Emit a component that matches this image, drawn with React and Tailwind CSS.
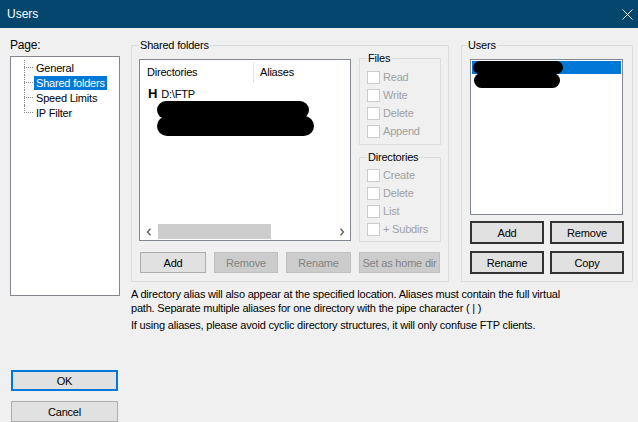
import React from "react";

const font = { fontFamily: '"Liberation Sans", Arial, sans-serif' };

const treeItems = ["General", "Shared folders", "Speed Limits", "IP Filter"];

function TreeRow({ label, selected, last }) {
  return (
    <div className="flex h-[15px] items-center">
      {/* connector */}
      <div className="relative h-full w-[10px] shrink-0">
        <div
          className={`absolute left-0 top-0 w-0 border-l border-dotted border-[#8a8a8a] ${
            last ? "h-[8px]" : "h-full"
          }`}
        />
        <div className="absolute left-0 top-[7px] w-[9px] border-t border-dotted border-[#8a8a8a]" />
      </div>
      <span
        className={`px-[2px] leading-[14px] ${
          selected ? "bg-[#0078d7] text-white" : "text-black"
        }`}
      >
        {label}
      </span>
    </div>
  );
}

function Check({ label }) {
  return (
    <div className="flex h-[18px] items-center gap-[3px]">
      <span className="h-[13px] w-[13px] border border-[#cccccc] bg-white" />
      <span className="text-[#a0a0a0]">{label}</span>
    </div>
  );
}

function Btn({ children, disabled, className = "" }) {
  return (
    <button
      className={`flex items-center justify-center whitespace-nowrap border ${
        disabled
          ? "border-[#bfbfbf] bg-[#cccccc] text-[#838383]"
          : "border-[#adadad] bg-[#e1e1e1] text-black"
      } ${className}`}
    >
      {children}
    </button>
  );
}

function UserBtn({ children }) {
  return (
    <button className="flex h-[23px] w-[74px] items-center justify-center border-2 border-[#333333] bg-[#e1e1e1] text-black">
      {children}
    </button>
  );
}

function Chevron({ dir }) {
  return (
    <svg width="6" height="8" viewBox="0 0 6 8">
      <path
        d={dir === "left" ? "M4.5 0.8 L1.5 4 L4.5 7.2" : "M1.5 0.8 L4.5 4 L1.5 7.2"}
        fill="none"
        stroke="#606060"
        strokeWidth="1.4"
      />
    </svg>
  );
}

export default function App() {
  return (
    <div
      style={font}
      className="flex h-[422px] w-[638px] flex-col overflow-hidden bg-[#f0f0f0] text-[11px] leading-[14px] tracking-[-0.2px] text-black"
    >
      {/* Title bar */}
      <div className="flex h-[28px] shrink-0 items-center justify-between bg-[#05466e] pl-[7px] pr-[5px] text-[12px] tracking-normal text-white">
        <span>Users</span>
        <svg width="11" height="11" viewBox="0 0 11 11">
          <path d="M0.5 0.5 L10.5 10.5 M10.5 0.5 L0.5 10.5" stroke="white" strokeWidth="1" />
        </svg>
      </div>

      <div className="flex pl-[10px]">
        {/* Left column */}
        <div className="flex w-[110px] flex-col">
          <div className="mt-[10px] h-[14px] text-[12px]">Page:</div>
          <div className="mt-[4px] h-[240px] border border-[#828790] bg-white pl-[13px] pt-[3px]">
            {treeItems.map((t, i) => (
              <TreeRow key={t} label={t} selected={i === 1} last={i === treeItems.length - 1} />
            ))}
          </div>
          <button className="ml-[1px] mt-[74px] flex h-[21px] w-[107px] items-center justify-center border-2 border-[#0078d7] bg-[#e1e1e1]">
            OK
          </button>
          <button className="ml-[1px] mt-[10px] flex h-[21px] w-[107px] items-center justify-center border border-[#adadad] bg-[#e1e1e1]">
            Cancel
          </button>
        </div>

        {/* Right side */}
        <div className="ml-[11px] flex flex-col">
          <div className="mt-[10px] flex gap-[12px]">
            {/* Shared folders */}
            <fieldset className="h-[244px] w-[318px] border border-[#dcdcdc] px-[7px]">
              <legend className="px-[1px] leading-[14px]">Shared folders</legend>
              <div className="flex items-start gap-[8px]">
                <div className="mt-[7px] flex h-[182px] w-[212px] flex-col border border-[#828790] bg-white">
                  <div className="flex h-[24px] items-center">
                    <span className="w-[113px] pl-[7px]">Directories</span>
                    <span className="h-[21px] border-l border-[#e5e5e5]" />
                    <span className="pl-[6px]">Aliases</span>
                  </div>
                  <div className="mt-[2px] flex h-[16px] items-center pl-[8px]">
                    <span className="text-[13px] font-bold">H</span>
                    <span className="ml-[4px]">D:\FTP</span>
                  </div>
                  <div className="-mt-[1px] ml-[17px] flex flex-col">
                    <span className="h-[18px] w-[152px] rounded-full bg-black" />
                    <span className="-mt-[3px] h-[20px] w-[157px] rounded-full bg-black" />
                  </div>
                  <div className="mt-auto flex h-[17px] items-center">
                    <span className="flex w-[18px] justify-center">
                      <Chevron dir="left" />
                    </span>
                    <span className="h-[15px] w-[113px] bg-[#cdcdcd]" />
                    <span className="ml-auto flex w-[17px] justify-center">
                      <Chevron dir="right" />
                    </span>
                  </div>
                </div>

                <div className="-mt-[1px] flex w-[82px] flex-col">
                  <fieldset className="h-[94px] border border-[#dcdcdc] pl-[7px] pt-[3px]">
                    <legend className="px-[1px] leading-[14px]">Files</legend>
                    <Check label="Read" />
                    <Check label="Write" />
                    <Check label="Delete" />
                    <Check label="Append" />
                  </fieldset>
                  <fieldset className="mt-[5px] h-[92px] border border-[#dcdcdc] pl-[7px] pt-[2px]">
                    <legend className="px-[1px] leading-[14px]">Directories</legend>
                    <Check label="Create" />
                    <Check label="Delete" />
                    <Check label="List" />
                    <Check label="+ Subdirs" />
                  </fieldset>
                </div>
              </div>
              <div className="mt-[10px] flex gap-[8px] pl-[1px]">
                <Btn className="h-[21px] w-[66px]">Add</Btn>
                <Btn disabled className="h-[21px] w-[64px]">Remove</Btn>
                <Btn disabled className="h-[21px] w-[65px]">Rename</Btn>
                <Btn disabled className="h-[21px] w-[81px]">Set as home dir</Btn>
              </div>
            </fieldset>

            {/* Users */}
            <fieldset className="h-[244px] w-[172px] border border-[#dcdcdc] pl-[8px]">
              <legend className="-ml-[3px] px-[1px] leading-[14px]">Users</legend>
              <div className="mt-[7px] h-[156px] w-[153px] border border-[#828790] bg-white px-[1px] pt-[1px]">
                <div className="h-[13px] bg-[#0078d7]">
                  <div className="flex flex-col pl-[1px]">
                    <span className="h-[13px] w-[90px] rounded-full bg-black" />
                    <span className="-mt-[1px] ml-[1px] h-[15px] w-[86px] rounded-full bg-black" />
                  </div>
                </div>
              </div>
              <div className="mt-[6px] flex gap-[6px]">
                <UserBtn>Add</UserBtn>
                <UserBtn>Remove</UserBtn>
              </div>
              <div className="mt-[7px] flex gap-[6px]">
                <UserBtn>Rename</UserBtn>
                <UserBtn>Copy</UserBtn>
              </div>
            </fieldset>
          </div>

          <div className="mt-[5px] w-[440px]">
            A directory alias will also appear at the specified location. Aliases must contain the full virtual
            path. Separate multiple aliases for one directory with the pipe character ( | )
          </div>
          <div className="mt-[3px]">
            If using aliases, please avoid cyclic directory structures, it will only confuse FTP clients.
          </div>
        </div>
      </div>
    </div>
  );
}
